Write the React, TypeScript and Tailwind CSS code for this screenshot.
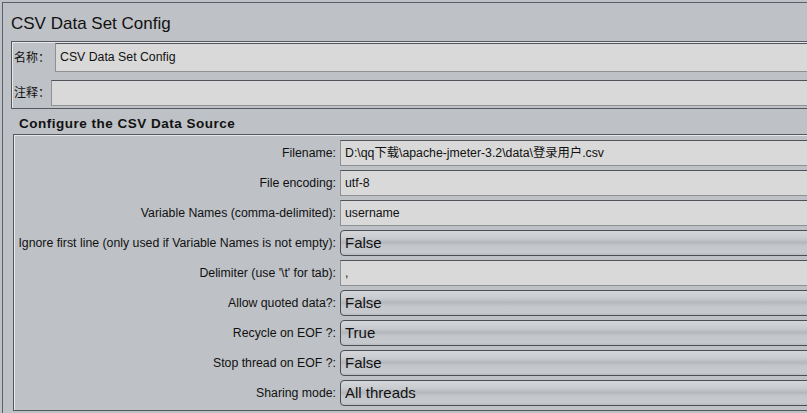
const font = "font-['Liberation_Sans','Noto_Sans_CJK_SC',sans-serif]";

type Row = { label: string; value: string; kind: 'text' | 'combo' };

const rows: Row[] = [
  { label: 'Filename:', value: 'D:\\qq下载\\apache-jmeter-3.2\\data\\登录用户.csv', kind: 'text' },
  { label: 'File encoding:', value: 'utf-8', kind: 'text' },
  { label: 'Variable Names (comma-delimited):', value: 'username', kind: 'text' },
  { label: 'Ignore first line (only used if Variable Names is not empty):', value: 'False', kind: 'combo' },
  { label: "Delimiter (use '\\t' for tab):", value: ',', kind: 'text' },
  { label: 'Allow quoted data?:', value: 'False', kind: 'combo' },
  { label: 'Recycle on EOF ?:', value: 'True', kind: 'combo' },
  { label: 'Stop thread on EOF ?:', value: 'False', kind: 'combo' },
  { label: 'Sharing mode:', value: 'All threads', kind: 'combo' },
];

function TextField({ value, className = '' }: { value: string; className?: string }) {
  return (
    <div
      className={`flex items-center h-[26px] bg-[#d9d9d9] border border-[#8e9094] border-t-[#505359] pl-[4px] text-[12.3px] text-[#111] whitespace-nowrap ${className}`}
    >
      {value}
    </div>
  );
}

function Combo({ value }: { value: string }) {
  return (
    <div className="flex items-center h-[26px] flex-1 rounded-l-[4px] border border-[#4b4e53] bg-[linear-gradient(to_bottom,#d4d6da_0%,#c8cbcf_30%,#b4b7bc_48%,#c3c6cb_62%,#c6c9ce_90%,#b8bbc0_100%)] pl-[4px] text-[15px] text-[#111] whitespace-nowrap">
      {value}
    </div>
  );
}

export default function App() {
  return (
    <div className={`${font} w-[807px] h-[413px] overflow-hidden bg-[#bec1c6] pt-[2px] pl-[2px]`}>
      <div className="w-[840px] h-[420px] border-l border-t border-[#5c5f65] pl-[8px]">
        <h1 className="text-[17px] text-[#111] h-[38px] pt-[11px] leading-[20px]">CSV Data Set Config</h1>

        <div className="h-[68px] border border-[#55585e] shadow-[inset_1px_1px_0_#e6e8ea] pl-[2px] pt-[1px] flex flex-col gap-[8px]">
          <div className="flex items-center h-[29px]">
            <span className="w-[41px] shrink-0 whitespace-nowrap text-[12px] text-[#111]">名称：</span>
            <TextField value="CSV Data Set Config" className="flex-1 h-[29px]" />
          </div>
          <div className="flex items-center h-[26px]">
            <span className="w-[37px] shrink-0 whitespace-nowrap text-[12px] text-[#111]">注释：</span>
            <TextField value="" className="flex-1 h-[26px]" />
          </div>
        </div>

        <div className="pl-[2px]">
          <h2 className="pl-[6px] h-[25px] pt-[7px] text-[13.5px] font-bold tracking-[0.5px] text-[#111] leading-[16px]">
            Configure the CSV Data Source
          </h2>
          <div className="h-[277px] border border-[#55585e] shadow-[inset_1px_1px_0_#e6e8ea] pt-[5px] flex flex-col gap-[4px]">
            {rows.map((r) => (
              <div key={r.label} className="flex items-center h-[26px]">
                <span className="w-[326px] shrink-0 text-right pr-[4px] text-[12.3px] text-[#111] whitespace-nowrap">{r.label}</span>
                {r.kind === 'text' ? <TextField value={r.value} className="flex-1" /> : <Combo value={r.value} />}
              </div>
            ))}
          </div>
        </div>
      </div>
    </div>
  );
}
